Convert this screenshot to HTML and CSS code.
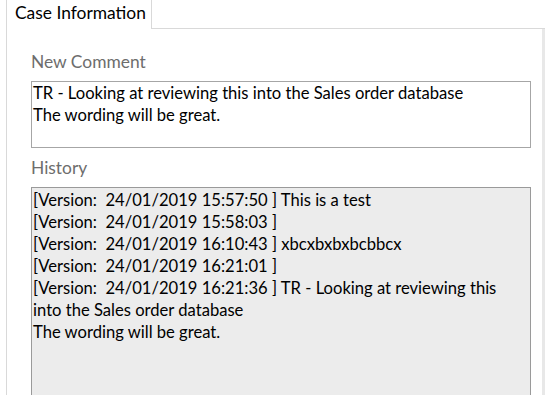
FILE: index.html
```html
<!DOCTYPE html>
<html lang="en">

<head>
    <meta charset="UTF-8">
    <title>Case Information</title>
    <link rel="stylesheet" href="styles.css">
</head>

<body>
    <div class="tabs">
        <div class="tab">Case Information</div>
        <div class="tab-rest"></div>
    </div>

    <div class="panel">
        <div class="field">
            <label class="label">New Comment</label>
            <div class="box comment">TR - Looking at reviewing this into the Sales order database
The wording will be great.</div>
        </div>

        <div class="field">
            <label class="label">History</label>
            <div class="box history">[Version:  24/01/2019 15:57:50 ] This is a test
[Version:  24/01/2019 15:58:03 ]
[Version:  24/01/2019 16:10:43 ] xbcxbxbxbcbbcx
[Version:  24/01/2019 16:21:01 ]
[Version:  24/01/2019 16:21:36 ] TR - Looking at reviewing this
into the Sales order database
The wording will be great.</div>
        </div>
    </div>
</body>

</html>
```

FILE: styles.css
```css
body {
    font-family: Lato, 'Open Sans', sans-serif;
    font-size: 16.6px;
    margin: 0;
    background: #fff;
    color: #000;
    overflow: hidden;
    height: 395px;
}

.tabs {
    display: flex;
    width: 545px;
    height: 29px;
    padding-left: 6px;
    box-sizing: border-box;
}

.tab {
    width: 146px;
    box-sizing: border-box;
    border: 1px solid #d9d9d9;
    border-top: none;
    border-bottom: none;
    padding: 2px 0 0 8px;
    font-size: 17.4px;
    line-height: 22px;
    white-space: nowrap;
}

.tab-rest {
    flex: 1;
    border-bottom: 1px solid #d9d9d9;
}

.panel {
    margin-left: 6px;
    width: 539px;
    height: 366px;
    box-sizing: border-box;
    border-left: 1px solid #d9d9d9;
    border-right: 3px solid #e8e8e8;
    padding: 22px 11px 0 24px;
}

.field {
    display: flex;
    flex-direction: column;
}

.label {
    color: #6d6d6d;
    font-size: 17.4px;
    line-height: 22px;
    margin-bottom: 8px;
}

.box {
    white-space: pre-wrap;
    line-height: 22px;
    border: 1px solid #a6a6a6;
    padding: 0 1px;
}

.comment {
    height: 65px;
    margin-bottom: 9px;
}

.history {
    height: 220px;
    background: #ececec;
    border-color: #9a9a9a;
    padding-top: 1px;
}
```
